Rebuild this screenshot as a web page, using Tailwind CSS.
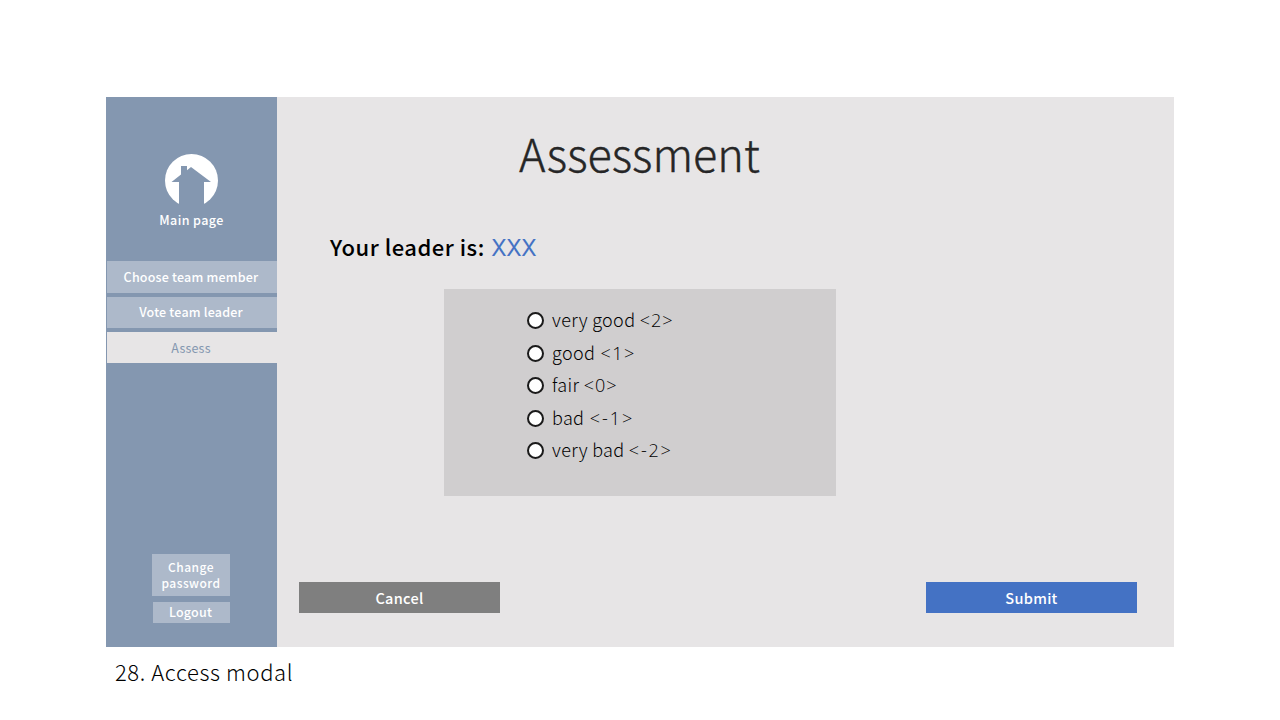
<!DOCTYPE html>
<html lang="en">
<head>
<meta charset="utf-8">
<title>Assessment</title>
<script src="https://cdn.jsdelivr.net/npm/@tailwindcss/browser@4"></script>
</head>
<body class="h-[720px] w-[1280px] overflow-hidden bg-white pt-[97px] font-['Noto_Sans_CJK_SC',sans-serif] text-black">
<div class="ml-[106px] flex h-[550px] w-[1068px] bg-[#e7e5e6]">
  <aside class="flex w-[171px] flex-col bg-[#8497b0] text-[12.5px] font-medium tracking-[0.2px] text-white">
    <a class="mt-[57px] flex flex-col items-center">
      <svg class="h-[53px] w-[53px]" viewBox="0 0 53 53"><circle cx="26.5" cy="26.5" r="26.5" fill="#fff"/><path fill="#8497b0" d="M6.5 28 16 20.5V12h6v4.2l4-3.2 20 15h-7v25H14V28z"/></svg>
      <span class="mt-[3px] mb-px h-5 leading-5 tracking-[0.4px] whitespace-nowrap">Main page</span>
    </a>
    <nav class="mt-[30px] ml-px flex flex-col gap-1 text-center">
      <a class="h-8 bg-[#adb9ca] pr-0.5 leading-8">Choose team member</a>
      <a class="h-[31px] bg-[#adb9ca] pr-0.5 leading-[30px]">Vote team leader</a>
      <a class="h-[31px] bg-[#e7e5e6] pr-0.5 leading-[32px] font-normal text-[#8497b0]">Assess</a>
    </nav>
    <div class="mt-auto mb-6 ml-[46px] flex w-[78px] flex-col items-end gap-1.5 text-center">
      <button class="h-[42px] w-full bg-[#adb9ca] text-[12px] leading-4 tracking-[0.45px]"><span class="block">Change</span><span class="block">password</span></button>
      <button class="h-[21px] w-[77px] bg-[#adb9ca] pr-0.5 pb-px leading-5">Logout</button>
    </div>
  </aside>
  <main class="flex flex-1 flex-col">
    <h1 class="mt-[26px] ml-[242px] h-[60px] text-[45px] leading-[60px] font-light whitespace-nowrap text-[#262626] [-webkit-text-stroke:0.4px_#262626]">Assessment</h1>
    <p class="mt-[47px] ml-[53px] h-8 text-[22px] leading-8 font-medium tracking-[0.5px] whitespace-nowrap">Your leader is: <span class="ml-px font-['Inter',sans-serif] text-[22.5px] font-normal tracking-[-0.3px] text-[#4472c4]">XXX</span></p>
    <div class="mt-[27px] ml-[167px] flex h-[207px] w-[392px] flex-col bg-[#d0cecf] pt-[15px] pl-[83px] text-[18px] font-light tracking-[0.35px]">
      <label class="flex h-[32.5px] items-center gap-2"><i class="size-[17px] rounded-full border-2 border-[#1a1a1a] bg-white"></i><span class="pb-px">very good <span class="font-['Open_Sans',sans-serif] tracking-[1px]">&lt;2&gt;</span></span></label>
      <label class="flex h-[32.5px] items-center gap-2"><i class="mt-px size-[17px] rounded-full border-2 border-[#1a1a1a] bg-white"></i><span>good <span class="ml-px font-['Open_Sans',sans-serif] tracking-[1.4px]">&lt;1&gt;</span></span></label>
      <label class="flex h-[32.5px] items-center gap-2"><i class="size-[17px] rounded-full border-2 border-[#1a1a1a] bg-white"></i><span class="pb-px">fair <span class="font-['Open_Sans',sans-serif] tracking-[1px]">&lt;0&gt;</span></span></label>
      <label class="flex h-[32.5px] items-center gap-2"><i class="mt-px size-[17px] rounded-full border-2 border-[#1a1a1a] bg-white"></i><span>bad <span class="ml-px font-['Open_Sans',sans-serif] tracking-[2px]">&lt;-1&gt;</span></span></label>
      <label class="flex h-[32.5px] items-center gap-2"><i class="size-[17px] rounded-full border-2 border-[#1a1a1a] bg-white"></i><span class="pb-px">very bad <span class="font-['Open_Sans',sans-serif] tracking-[1.8px]">&lt;-2&gt;</span></span></label>
    </div>
    <div class="mt-[86px] mr-[37px] ml-[22px] flex justify-between text-[14.5px] font-medium tracking-[0.3px] text-white">
      <button class="h-[31px] w-[201px] bg-[#7f7f7f] leading-[31px]">Cancel</button>
      <button class="h-[31px] w-[211px] bg-[#4472c4] leading-[31px]">Submit</button>
    </div>
  </main>
</div>
<p class="mt-[8px] ml-[115px] h-8 text-[22px] leading-8 font-light tracking-[0.6px] whitespace-nowrap">28. Access modal</p>
</body>
</html>
